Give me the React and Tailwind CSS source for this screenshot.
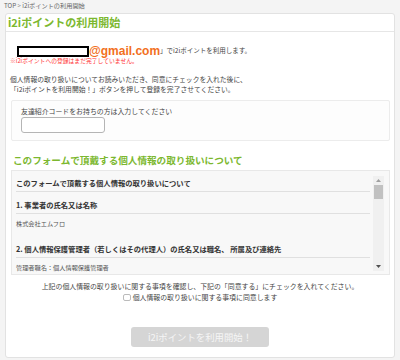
import React from 'react'

const jp = { fontFamily: '"Noto Sans CJK JP", "Noto Sans", sans-serif' }

export default function App() {
  return (
    <div style={jp} className="w-[400px] h-[360px] overflow-hidden bg-[#f4f4f4] text-[#333]">
      <div className="h-[13px] pl-[4px] pt-[1px] text-[6.2px] leading-[9px] text-[#666]">TOP &gt; i2iポイントの利用開始</div>

      <div className="ml-[5px] w-[390px] bg-white border border-[#e2e2e2] rounded-[3px]">
        <div className="h-[18px] border-b border-[#e6e6e6] pl-[2px] flex items-center text-[11px] font-bold text-[#7cb82f]">
          i2iポイントの利用開始
        </div>

        <div className="px-[4px] pb-[10px]">
          <div className="mt-[13px] flex items-center h-[12px]">
            <div className="ml-[7px] w-[72px] h-[11px] border-[2px] border-black bg-white"></div>
            <span style={{ fontFamily: '"Liberation Sans", Arial, sans-serif' }} className="text-[12px] font-bold text-[#f26f21] leading-[12px]">@gmail.com</span>
            <span className="text-[6.5px] text-[#444]">」でi2iポイントを利用します。</span>
          </div>
          <div className="mt-[0px] text-[5.8px] leading-[8px] text-[#ff3333]">※i2iポイントへの登録はまだ完了していません。</div>

          <div className="mt-[10px] text-[6.8px] leading-[9.5px] text-[#444]">
            <div>個人情報の取り扱いについてお読みいただき、同意にチェックを入れた後に、</div>
            <div>「i2iポイントを利用開始！」ボタンを押して登録を完了させてください。</div>
          </div>

          <div className="mt-[6px] ml-[1px] border border-[#ececec] rounded-[2px] bg-[#fdfdfd] pl-[9px] pt-[5px] pb-[7px]">
            <div className="text-[6.9px] leading-[10px] text-[#444]">友達紹介コードをお持ちの方は入力してください</div>
            <div className="mt-[1px] w-[84px] h-[16px] border border-[#b5b5b5] rounded-[3px] bg-white"></div>
          </div>

          <div className="mt-[13px] ml-[3px] text-[9.6px] leading-[12px] font-bold text-[#7cb82f]">このフォームで頂戴する個人情報の取り扱いについて</div>

          <div className="mt-[4px] ml-[1px] h-[105px] border border-[#e8e8e8] bg-[#f8f8f8] flex">
            <div className="flex-1 overflow-hidden pl-[4px] pr-[3px] pt-[7px]">
              <div className="text-[7.3px] leading-[10px] font-bold text-[#333] pb-[3px] border-b border-[#e0e0e0]">このフォームで頂戴する個人情報の取り扱いについて</div>
              <div className="mt-[8px] text-[7.3px] leading-[10px] font-bold text-[#333] pb-[3px] border-b border-[#e0e0e0]">1. 事業者の氏名又は名称</div>
              <div className="mt-[5px] text-[6.2px] leading-[9px] text-[#555]">株式会社エムフロ</div>
              <div className="mt-[16px] text-[7.3px] leading-[10px] font-bold text-[#333] pb-[3px] border-b border-[#e0e0e0]">2. 個人情報保護管理者（若しくはその代理人）の氏名又は職名、 所属及び連絡先</div>
              <div className="mt-[5px] text-[6.2px] leading-[9px] text-[#555]">管理者職名：個人情報保護管理者</div>
            </div>
            <div className="w-[11px] mr-[5px] mt-[5px] mb-[3px] bg-[#f0f0f0] flex flex-col items-center">
              <svg width="11" height="9" viewBox="0 0 11 9"><path d="M3 6 L5.5 3 L8 6 Z" fill="#a0a0a0" /></svg>
              <div className="w-[9px] h-[14px] bg-[#c1c1c1]"></div>
              <div className="flex-1"></div>
              <svg width="11" height="9" viewBox="0 0 11 9"><path d="M3 3 L5.5 6 L8 3 Z" fill="#505050" /></svg>
            </div>
          </div>

          <div className="mt-[6px] text-center text-[6.9px] leading-[10px] text-[#444]">上記の個人情報の取り扱いに関する事項を確認し、下記の「同意する」にチェックを入れてください。</div>
          <div className="flex items-center justify-center h-[10px] mt-[1px]">
            <div className="w-[8px] h-[7px] border border-[#bbb] rounded-[2px] bg-white mr-[2px]"></div>
            <span className="text-[6.9px] leading-[10px] text-[#444]">個人情報の取り扱いに関する事項に同意します</span>
          </div>

          <div className="mt-[25px] flex justify-center">
            <div className="w-[138px] h-[20px] rounded-[3px] bg-[#d5d5d5] flex items-center justify-center text-[9.4px] text-[#f6f6f6]">i2iポイントを利用開始！</div>
          </div>
        </div>
      </div>
    </div>
  )
}
